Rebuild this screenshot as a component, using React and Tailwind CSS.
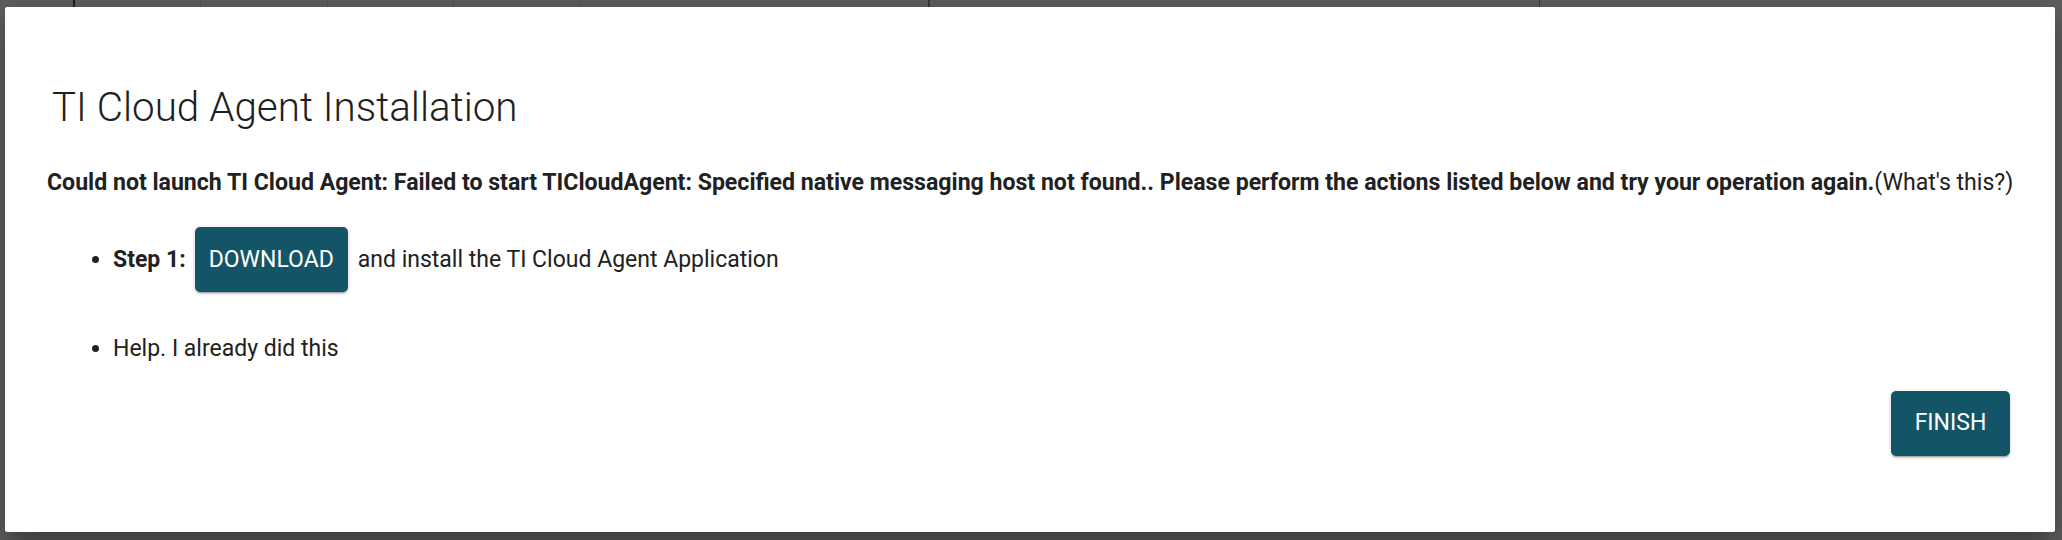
import React from "react";

export default function App() {
  const font = { fontFamily: "Roboto, 'Liberation Sans', sans-serif" };
  return (
    <div className="relative w-[2062px] h-[540px] overflow-hidden bg-[#5f5f5f]" style={font}>
      {/* dimmed table header behind the overlay */}
      <div className="flex h-[40px]">
        <div className="w-[75px] border-r-2 border-[#1e1e1e]" />
        <div className="w-[126px] border-r border-[#525252]" />
        <div className="w-[127px] border-r border-[#525252]" />
        <div className="w-[126px] border-r border-[#525252]" />
        <div className="w-[127px] border-r border-[#525252]" />
        <div className="w-[349px] border-r-2 border-[#3a3a3a]" />
        <div className="w-[610px] border-r border-[#3a3a3a]" />
        <div className="flex-1" />
      </div>

      {/* modal dialog */}
      <div className="absolute top-[7px] left-[5px] w-[2050px] h-[525px] bg-white rounded-[2px] shadow-[0_11px_15px_-7px_rgba(0,0,0,0.2),0_24px_38px_3px_rgba(0,0,0,0.14),0_9px_46px_8px_rgba(0,0,0,0.12)] flex flex-col pl-[42px] pr-[40px] pt-[77px] text-[#212121]">
        <h2 className="ml-[5px] text-[40.4px] leading-[48px] font-light text-[#1f1f1f]">
          TI Cloud Agent Installation
        </h2>
        <p className="mt-[36px] text-[23.1px] leading-[30px] whitespace-nowrap">
          <span className="font-bold">
            Could not launch TI Cloud Agent: Failed to start TICloudAgent: Specified native messaging host not found.. Please perform the actions listed below and try your operation again.
          </span>
          <span className="font-normal">(What's this?)</span>
        </p>
        <ul className="mt-[29px] pl-[66px] list-disc text-[23px] leading-[34px]">
          <li>
            <div className="flex items-center h-[65px]">
              <span className="font-bold">Step 1:</span>
              <button className="ml-[9px] h-[65px] px-[14px] rounded-[5px] bg-[#135566] text-white text-[23px] uppercase shadow-[0_3px_1px_-2px_rgba(0,0,0,0.2),0_2px_2px_0_rgba(0,0,0,0.14),0_1px_5px_0_rgba(0,0,0,0.12)]">
                DOWNLOAD
              </button>
              <span className="ml-[10px]">and install the TI Cloud Agent Application</span>
            </div>
          </li>
          <li className="mt-[40px]">Help. I already did this</li>
        </ul>
        <div className="mt-[25px] pr-[5px] flex justify-end">
          <button className="h-[65px] w-[119px] rounded-[5px] bg-[#135566] text-white text-[23px] uppercase shadow-[0_3px_1px_-2px_rgba(0,0,0,0.2),0_2px_2px_0_rgba(0,0,0,0.14),0_1px_5px_0_rgba(0,0,0,0.12)]">
            FINISH
          </button>
        </div>
      </div>
    </div>
  );
}
